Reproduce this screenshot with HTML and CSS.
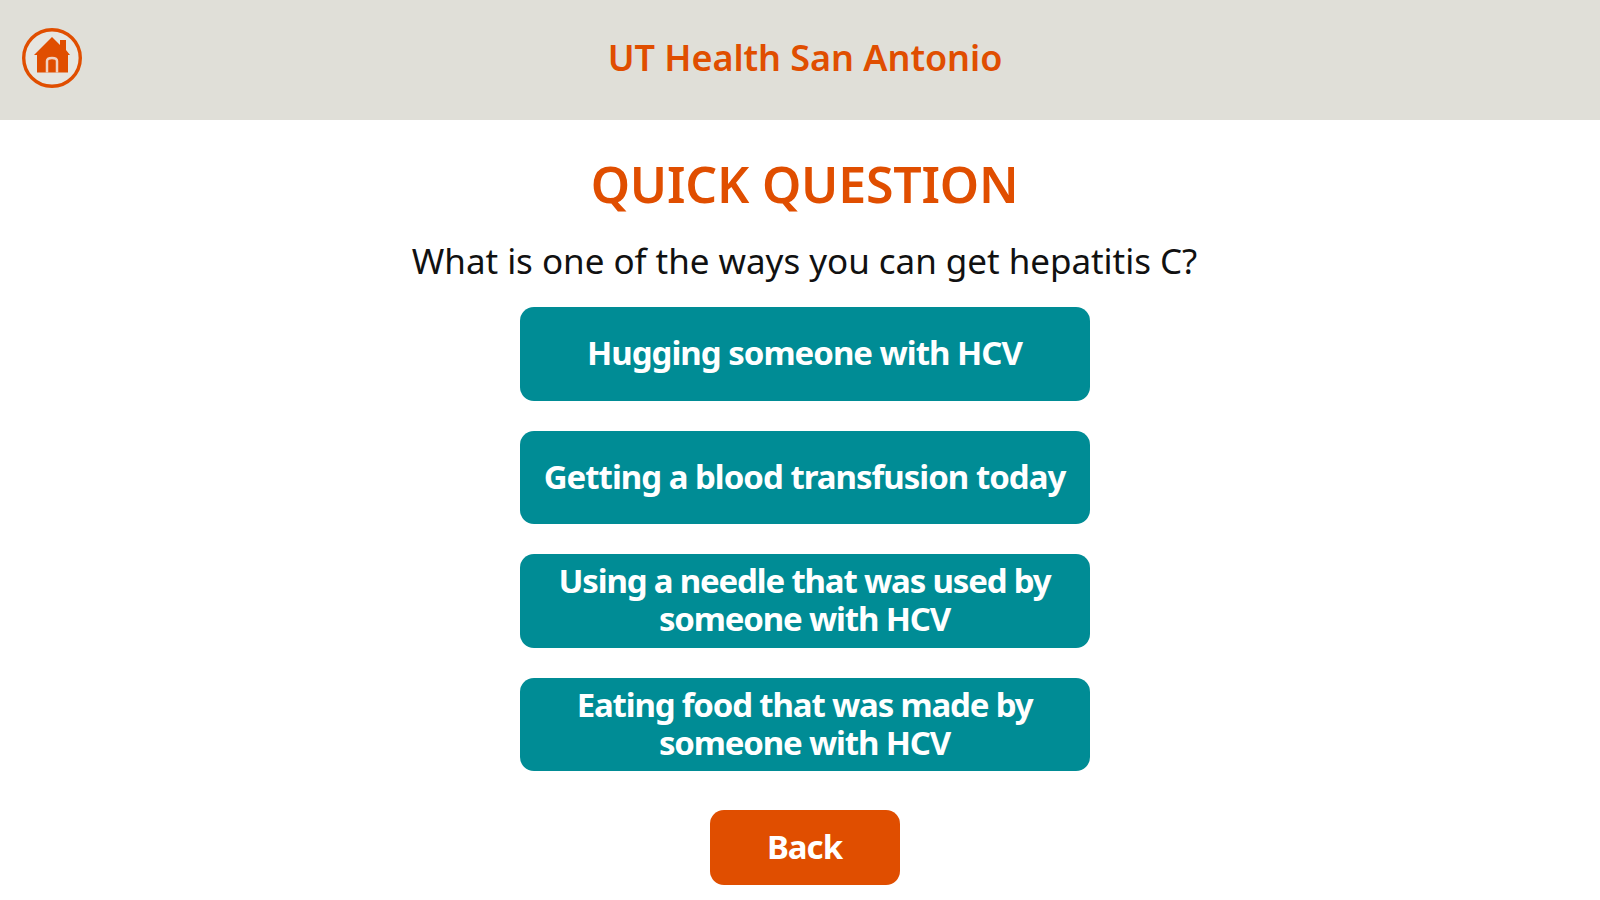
FILE: index.html
```html
<!DOCTYPE html>
<html lang="en">
  <head>
    <meta charset="UTF-8" />
    <meta name="viewport" content="width=device-width, initial-scale=1.0" />
    <title>Quick Question</title>
    <link rel="stylesheet" href="styles.css">
  </head>
  <body>
    <header class="header">
      <a class="home" href="#" aria-label="Home">
        <svg viewBox="0 0 60 60" width="60" height="60">
          <circle cx="30" cy="30" r="28.3" fill="#e6e5e0" stroke="currentColor" stroke-width="3.4" />
          <path fill="currentColor" d="M30 9 L38 17 V12 H44 V22 L48 27 H46 V44.5 H15 V27 H12 Z" />
          <path fill="none" stroke="#efd2c2" stroke-width="2.5" d="M25 44.5 V33 Q25 30 30 30 Q35 30 35 33 V44.5" />
        </svg>
      </a>
      <div class="brand">UT Health San Antonio</div>
    </header>
    <main class="quiz">
      <h1 class="title">QUICK QUESTION</h1>
      <p class="question">What is one of the ways you can get hepatitis C?</p>
      <div class="answers">
        <button class="btn">Hugging someone with HCV</button>
        <button class="btn">Getting a blood transfusion today</button>
        <button class="btn btn-long">Using a needle that was used by<br />someone with HCV</button>
        <button class="btn btn-long">Eating food that was made by<br />someone with HCV</button>
      </div>
      <button class="btn btn-back">Back</button>
    </main>
  </body>
</html>
```
FILE: styles.css
```css
* {
  box-sizing: border-box;
}
body {
  margin: 0;
  height: 900px;
  overflow: hidden;
  background: #fff;
  font-family: "Noto Sans", "Open Sans", sans-serif;
}

.header {
  display: grid;
  grid-template-columns: 100px 1fr 90px;
  align-items: center;
  height: 120px;
  padding-bottom: 4px;
  background: #e0dfd8;
  color: #e04e00;
}
.home {
  display: block;
  width: 60px;
  height: 60px;
  margin-left: 22px;
  color: inherit;
}
.brand {
  text-align: center;
  font-size: 36px;
  font-weight: 600;
  line-height: 48px;
  letter-spacing: -0.05px;
  white-space: nowrap;
}

.quiz {
  display: flex;
  flex-direction: column;
  align-items: center;
  padding-left: 9px;
  white-space: nowrap;
}
.title {
  margin: 30px 0 0;
  color: #e04e00;
  font-size: 50px;
  font-weight: 600;
  line-height: 68px;
  letter-spacing: -0.2px;
}
.question {
  margin: 19px 0 0;
  color: #111;
  font-size: 35px;
  font-weight: 400;
  line-height: 48px;
  letter-spacing: -0.04px;
}

.answers {
  display: flex;
  flex-direction: column;
  gap: 30px;
  margin-top: 22px;
}
.btn {
  width: 570px;
  height: 93.5px;
  padding: 0 0 1px;
  border: 0;
  border-radius: 14px;
  background: #008c95;
  color: #fff;
  font-family: inherit;
  font-size: 33px;
  font-weight: 700;
  line-height: 38px;
  letter-spacing: -1px;
  text-align: center;
}
.btn-long {
  letter-spacing: -1.17px;
}
.btn-back {
  width: 190px;
  height: 75px;
  margin-top: 39px;
  background: #e04e00;
}
```
